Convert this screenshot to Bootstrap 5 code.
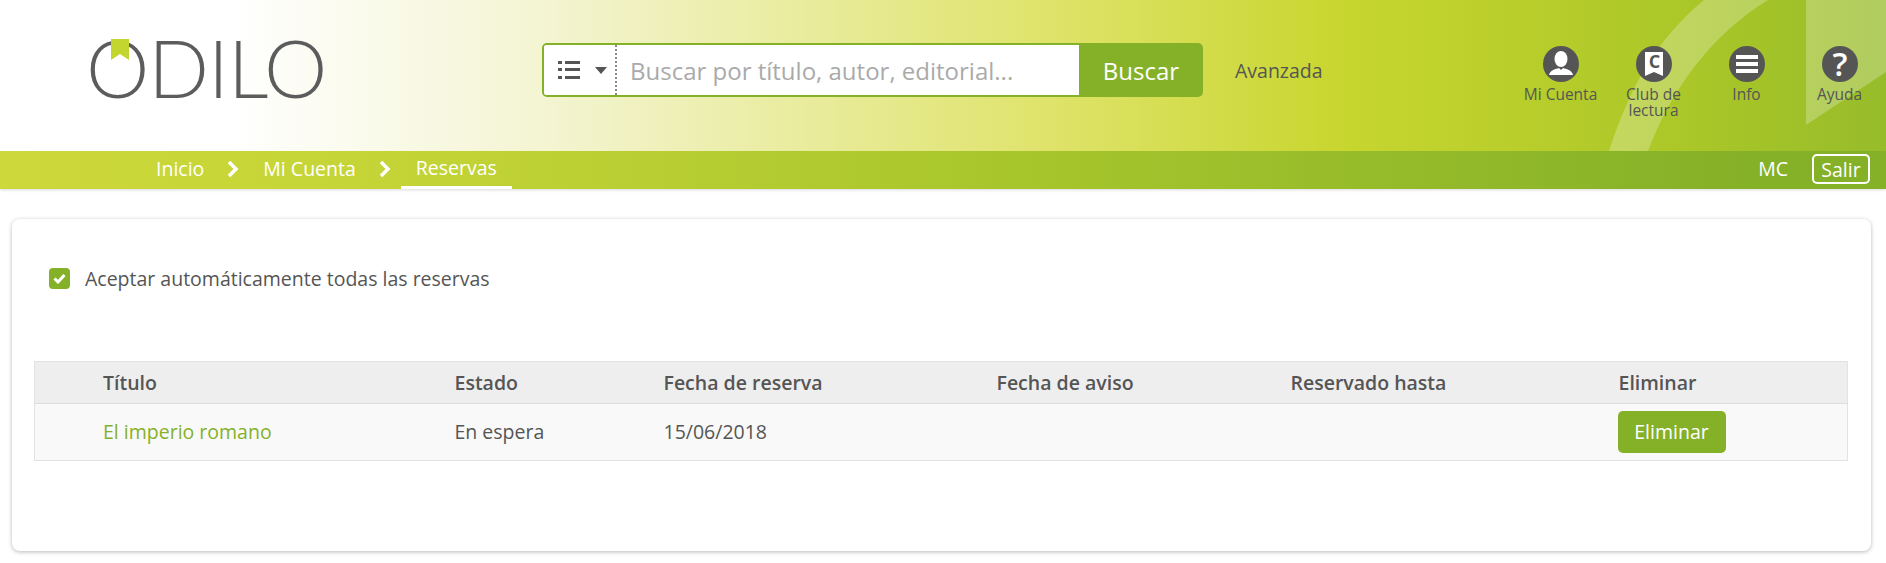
<!DOCTYPE html>
<html lang="es">
<head>
<meta charset="UTF-8">
<title>Reservas • Odilo</title>
<link href="https://cdn.jsdelivr.net/npm/bootstrap@5.3.3/dist/css/bootstrap.min.css" rel="stylesheet">
<style>
 body{background:#fff;font-family:"Open Sans",sans-serif;color:#555;font-size:19.5px}
 .top-head{height:151px;position:relative;background:linear-gradient(90deg,#fff 0,#fff 230px,#f3f4cf 560px,#dfe36a 1050px,#c8d62f 1340px,#abc728 1680px,#97bc2a 1886px)}
 .head-deco{position:absolute;top:0;right:0}
 .logo-box{width:542px;padding:27px 0 0 86px;position:relative}
 .logo-word{font-family:Lato,sans-serif;font-weight:300;font-size:80px;line-height:1;color:#5c5c5c;letter-spacing:-1px}
 .logo-mark{position:absolute;left:111px;top:39px}
 .search-box{margin-top:43px;width:661px;height:54px;border:2px solid #85b128;border-radius:5px;background:#85b128;position:relative}
 .search-kind{width:73px;padding-left:14px;gap:15px;background:#fff;border-right:2px dotted #888;border-radius:2px 0 0 2px}
 .search-input{flex:1;border:0;padding:1px 13px 0;font-size:24px;color:#555;outline:0;border-radius:0;font-family:inherit}
 .search-input::placeholder{color:#aaa;opacity:1}
 .search-btn{width:122px;border:0;background:#85b128;color:#fff;font-size:24px;padding:1px 0 0 2px}
 .adv-link{margin:59px 0 0 32px;color:#555;text-decoration:none;line-height:24px}
 .top-links{margin-left:auto;margin-top:46px;position:relative}
 .top-link{width:93px;text-align:center;color:#555;text-decoration:none;font-size:15.5px;line-height:16px}
 .top-link svg{display:block;margin:0 auto 4px}
 .top-link span{display:block}
 .crumb-bar{height:38px;background:linear-gradient(90deg,#cdd83a 0,#c4d436 400px,#a8c62c 1000px,#85b128 1750px,#85b128 100%);color:#fff;line-height:35px;box-shadow:0 1px 3px rgba(0,0,0,.15)}
 .crumb-list{padding-left:156px}
 .crumb-list a{color:#fff;text-decoration:none;margin-bottom:4px}
 .crumb-list svg{margin:0 24px 2px 23px}
 .crumb-list .crumb-active{border-bottom:3px solid #fff;height:38px;padding:0 15px;margin:0 0 0 -14px;line-height:33px}
 .salir-btn{border:2px solid #fff;border-radius:5px;background:none;color:#fff;height:30px;width:58px;padding:0;line-height:25px;font-size:19.5px;margin:3px 16px 0 24px}
 .main-card{margin:30px 15px 12px 12px;height:332px;border-radius:8px;box-shadow:0 1px 4px rgba(0,0,0,.28);padding:49px 23px 0 22px}
 .auto-check{gap:15px;height:21px;margin-left:15px;line-height:22px}
 .check-box{width:21px;height:21px;background:#85b128;border-radius:4px}
 .res-table{margin:72px 0 0;table-layout:fixed;border:1px solid #e3e3e3;--bs-table-color:#555;--bs-table-bg:transparent}
 .res-table th{background:#eee;font-weight:600;height:42px;padding:0;vertical-align:middle;border-bottom:1px solid #ddd}
 .res-table td{background:#f9f9f9;height:57px;padding:0;vertical-align:middle;border-bottom:0}
 .res-table a{color:#85b128;text-decoration:none}
 .col-tit{width:420px;padding-left:68px !important}
 .col-est{width:209px}
 .col-fec{width:333px}
 .col-avi{width:294px}
 .col-has{width:328px}
 .del-btn{background:#85b128;color:#fff;border:0;border-radius:5px;width:108px;height:42px;font-size:19.5px;padding:0;margin-left:-1px}
</style>
</head>
<body>

<!-- head -->
<header class="top-head d-flex">
  <svg class="head-deco" width="300" height="151" viewBox="0 0 300 151">
    <path d="M23 151C45 85 70 40 118 0h64C125 35 85 90 62 151z" fill="#fff" fill-opacity=".25"/>
    <path d="M220 0h80v72l-80 53z" fill="#fff" fill-opacity=".25"/>
  </svg>
  <div class="logo-box">
    <div class="logo-word">ODILO</div>
    <svg class="logo-mark" width="18" height="22" viewBox="0 0 18 22"><path d="M0 0h18v21l-9-6-9 6z" fill="#c3d52f"/></svg>
  </div>
  <form class="search-box d-flex" onsubmit="return false">
    <div class="search-kind d-flex align-items-center">
      <svg width="22" height="20" viewBox="0 0 22 20" fill="#555">
        <rect x="0" y="1" width="4" height="3"/><rect x="7" y="1" width="15" height="3"/>
        <rect x="0" y="8" width="4" height="3"/><rect x="7" y="8" width="15" height="3"/>
        <rect x="0" y="16" width="4" height="3"/><rect x="7" y="16" width="15" height="3"/>
      </svg>
      <svg width="12" height="7" viewBox="0 0 12 7" fill="#555"><path d="M0 0h12l-6 7z"/></svg>
    </div>
    <input class="search-input" type="text" placeholder="Buscar por título, autor, editorial...">
    <button class="search-btn">Buscar</button>
  </form>
  <a class="adv-link" href="#">Avanzada</a>
  <div class="top-links d-flex">
    <a class="top-link" href="#">
      <svg width="36" height="36" viewBox="0 0 36 36"><circle cx="18" cy="18" r="18" fill="#555"/><ellipse cx="18" cy="13" rx="6.500" ry="8" fill="#fff"/><path d="M6 29c1-5 7-6 10-7l2 2 2-2c3 1 9 2 10 7z" fill="#fff"/></svg>
      <span>Mi Cuenta</span>
    </a>
    <a class="top-link" href="#">
      <svg width="36" height="36" viewBox="0 0 36 36"><circle cx="18" cy="18" r="18" fill="#555"/><path d="M9 6h18v24l-9-4-9 4z" fill="#fff"/><text x="18.500" y="22" text-anchor="middle" font-family="Open Sans" font-weight="700" font-size="18" fill="#555">C</text></svg>
      <span>Club de lectura</span>
    </a>
    <a class="top-link" href="#">
      <svg width="36" height="36" viewBox="0 0 36 36"><circle cx="18" cy="18" r="18" fill="#555"/><rect x="7" y="9" width="22" height="4" fill="#fff"/><rect x="7" y="16" width="22" height="4" fill="#fff"/><rect x="7" y="23" width="22" height="4" fill="#fff"/></svg>
      <span>Info</span>
    </a>
    <a class="top-link" href="#">
      <svg width="36" height="36" viewBox="0 0 36 36"><circle cx="18" cy="18" r="18" fill="#555"/><text x="18" y="30" text-anchor="middle" font-family="Open Sans" font-weight="600" font-size="33" fill="#fff">?</text></svg>
      <span>Ayuda</span>
    </a>
  </div>
</header>

<!-- breadcrumb -->
<nav class="crumb-bar d-flex justify-content-between">
  <div class="crumb-list d-flex align-items-center">
    <a href="#">Inicio</a>
    <svg width="12" height="18" viewBox="0 0 12 18"><path d="M2 2l7 7-7 7" fill="none" stroke="#fff" stroke-width="3.500"/></svg>
    <a href="#">Mi Cuenta</a>
    <svg width="12" height="18" viewBox="0 0 12 18"><path d="M2 2l7 7-7 7" fill="none" stroke="#fff" stroke-width="3.500"/></svg>
    <a class="crumb-active" href="#">Reservas</a>
  </div>
  <div class="d-flex">
    <span>MC</span>
    <button class="salir-btn">Salir</button>
  </div>
</nav>

<!-- reservas -->
<main class="main-card">
  <div class="auto-check d-flex">
    <span class="check-box d-flex align-items-center justify-content-center">
      <svg width="13" height="11" viewBox="0 0 13 11"><path d="M1.500 5.500l3.500 3.500 6.500-7" fill="none" stroke="#fff" stroke-width="3"/></svg>
    </span>
    <span>Aceptar automáticamente todas las reservas</span>
  </div>
  <table class="table res-table">
    <thead>
      <tr><th class="col-tit">Título</th><th class="col-est">Estado</th><th class="col-fec">Fecha de reserva</th><th class="col-avi">Fecha de aviso</th><th class="col-has">Reservado hasta</th><th>Eliminar</th></tr>
    </thead>
    <tbody>
      <tr><td class="col-tit"><a href="#">El imperio romano</a></td><td>En espera</td><td>15/06/2018</td><td></td><td></td><td><button class="del-btn">Eliminar</button></td></tr>
    </tbody>
  </table>
</main>

<script src="https://cdn.jsdelivr.net/npm/bootstrap@5.3.3/dist/js/bootstrap.bundle.min.js"></script>
</body>
</html>
